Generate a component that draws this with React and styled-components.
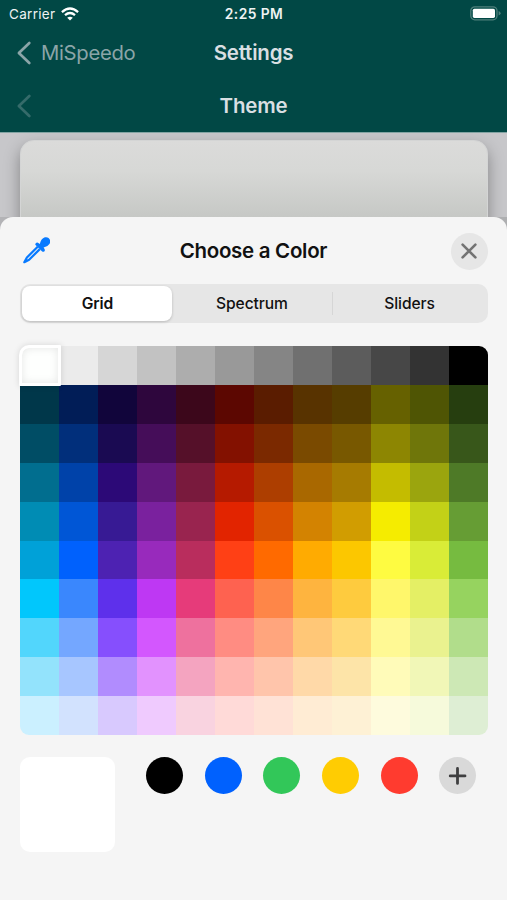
import React from "react";
import styled, { createGlobalStyle } from "styled-components";

const GlobalStyle = createGlobalStyle`
  *, *::before, *::after { box-sizing: border-box; }
  body {
    margin: 0;
    background: #014845;
    font-family: Inter, "Liberation Sans", sans-serif;
  }
  button { font: inherit; color: inherit; border: 0; padding: 0; margin: 0; }
`;

const PALETTE = [
  "FEFFFE EBEBEB D6D6D6 C2C2C2 ADADAD 999999 858585 707070 5C5C5C 474747 333333 000000",
  "00374A 011D57 11053B 2E063D 3C071B 5C0701 5A1C00 583300 563D00 666100 4F5504 263E0F",
  "004D65 012F7B 1A0A52 450D59 551029 831100 7B2900 7A4A00 785800 8D8602 6F760A 38571A",
  "016E8F 0042A9 2C0977 61187C 791A3D B51A00 AD3E00 A96800 A67B01 C4BC00 9BA50E 4E7A27",
  "008CB4 0056D6 371A94 7A219E 99244F E22400 DA5100 D38301 D19D01 F5EC00 C3D117 669D34",
  "00A1D8 0061FD 4D22B2 982ABC B92D5D FF4015 FF6A00 FFAB01 FCC700 FEFB41 D9EC37 76BB40",
  "01C7FC 3A87FD 5E30EB BE38F3 E63B7A FE6250 FE8648 FEB43F FECB3E FFF76B E4EF65 96D35F",
  "52D6FC 74A7FF 864FFD D357FE EE719E FF8C82 FFA57D FFC777 FFD977 FFF994 EAF28F B1DD8B",
  "93E3FC A7C6FF B18CFE E292FE F4A4C0 FFB5AF FFC5AB FFD9A8 FDE4A8 FFFBB9 F1F7B7 CDE8B5",
  "CBF0FF D2E2FE D8C9FE EFCAFE F9D3E0 FFDAD8 FFE2D6 FFECD4 FEF1D5 FEFBDD F6FADB DEEED4",
].flatMap((row) => row.split(" ").map((hex) => `#${hex}`));

const SAVED = ["#000000", "#0061fe", "#32c759", "#ffcc02", "#ff3b2f"];

const Screen = styled.div`
  width: 507px;
  height: 900px;
  display: flex;
  flex-direction: column;
  overflow: hidden;
  background: #014845;
`;

const StatusBar = styled.div`
  display: grid;
  grid-template-columns: 1fr auto 1fr;
  align-items: center;
  height: 26px;
  padding: 1px 6px 0 9px;
  color: #eef3f3;
  font-size: 13.5px;
`;

const Carrier = styled.div`
  display: flex;
  align-items: center;
  gap: 6px;
  letter-spacing: 0.3px;
`;

const Clock = styled.div`
  font-weight: 600;
  font-size: 13.8px;
  letter-spacing: 0.45px;
  margin-right: 2px;
`;

const BatterySlot = styled.div`
  display: flex;
  justify-content: flex-end;
`;

const NavBar = styled.div`
  display: grid;
  grid-template-columns: 1fr auto 1fr;
  align-items: center;
  height: 53px;
  padding: 0 16px;
`;

const BackLink = styled.div`
  display: flex;
  align-items: center;
  gap: 9px;
  color: #8ba5a8;
  opacity: ${(p) => (p.$faded ? 0.38 : 1)};
  font-size: 20.3px;
  letter-spacing: -0.32px;
`;

const NavTitle = styled.div`
  color: #d9dfe2;
  font-size: 20.5px;
  font-weight: 600;
  letter-spacing: -0.2px;
`;

const Backdrop = styled.div`
  flex: none;
  height: 85px;
  padding: 7px 19.5px 0 20.4px;
  background: #c7c7ca;
  border-top: 1px solid #83a4a3;
  overflow: hidden;
`;

const PreviewCard = styled.div`
  height: 110px;
  border-radius: 14px;
  border: 1px solid #d4d5d5;
  background: linear-gradient(#dbdbda 0, #d7d8d6 30px, #c6c8c5 76px);
  box-shadow: 0 7px 16px rgba(0, 0, 0, 0.34);
`;

const SheetArea = styled.div`
  flex: 1;
  background: linear-gradient(90deg, #b3b3b6, #aeafb1);
`;

const Sheet = styled.div`
  height: 100%;
  padding: 14px 19.5px 0 20.4px;
  border-radius: 13px 13px 0 0;
  background: #f5f5f5;
`;

const SheetHeader = styled.div`
  display: grid;
  grid-template-columns: 1fr auto 1fr;
  align-items: center;
  height: 40px;
`;

const SheetTitle = styled.div`
  margin-right: 1px;
  padding-bottom: 2px;
  color: #111;
  font-size: 20.5px;
  font-weight: 600;
  letter-spacing: -0.3px;
`;

const IconButton = styled.button`
  display: flex;
  align-items: center;
  justify-content: center;
  width: 37px;
  height: 37px;
  border-radius: 50%;
  background: ${(p) => p.$fill || "transparent"};
`;

const EyedropperButton = styled(IconButton)`
  justify-content: flex-start;
`;

const CloseButton = styled(IconButton)`
  justify-self: end;
`;

const Segments = styled.div`
  display: grid;
  grid-template-columns: 150px 1fr 156px;
  height: 39px;
  margin-top: 13px;
  padding: 2px 0 2px 2px;
  border-radius: 10px;
  background: #e6e6e6;
`;

const Segment = styled.button`
  display: flex;
  align-items: center;
  justify-content: center;
  border-radius: 8px;
  color: #111;
  font-size: 15.6px;
  font-weight: ${(p) => (p.$active ? 600 : 500)};
  letter-spacing: -0.1px;
  background: ${(p) => (p.$active ? "#fff" : "transparent")};
  box-shadow: ${(p) => (p.$active ? "0 1px 3px rgba(0,0,0,.2)" : "none")};
`;

const DividedSegment = styled(Segment)`
  border-radius: 0;
  background: linear-gradient(#d6d6d6, #d6d6d6) left center / 1px 23px no-repeat;
`;

const ColorGrid = styled.div`
  display: grid;
  grid-template-columns: repeat(12, 1fr);
  grid-template-rows: repeat(10, 1fr);
  height: 389px;
  margin-top: 23px;
  border-radius: 9px;
`;

const corner = { 0: "9px 0 0 0", 11: "0 9px 0 0", 108: "0 0 0 9px", 119: "0 0 9px 0" };

const Swatch = styled.div`
  background: ${(p) => p.$color};
  border-radius: ${(p) => corner[p.$index] || "0"};
`;

const SelectedSwatch = styled(Swatch)`
  position: relative;
  z-index: 1;
  margin: -1px -1.5px -1px -1px;
  border: 3px solid #fff;
  border-radius: 10px 1px 1px 1px;
  box-shadow: 0 0 6px rgba(0, 0, 0, 0.13), inset 0 0 8px rgba(0, 0, 0, 0.1);
`;

const Footer = styled.div`
  display: flex;
  align-items: flex-start;
  margin-top: 22px;
`;

const CurrentColor = styled.div`
  width: 95px;
  height: 95px;
  border-radius: 10px;
  background: #fff;
`;

const SavedColors = styled.div`
  display: flex;
  gap: 21.7px;
  margin-left: 30.6px;
`;

const ColorDot = styled(IconButton)`
  flex: none;
`;

const WifiIcon = () => (
  <svg width="18" height="14" viewBox="0 0 18 14" fill="none" stroke="#fff" strokeWidth="2.3">
    <path d="M.9 5.1Q9-2 17.1 5.1" />
    <path d="M4 8.2Q9 3.9 14 8.2" />
    <path d="M6.2 10.8Q9 8.5 11.8 10.8L9 13.6Z" fill="#fff" stroke="none" />
  </svg>
);

const BatteryIcon = () => (
  <svg width="31" height="15" viewBox="0 0 31 15">
    <rect x="0.8" y="0.8" width="26.2" height="13" rx="4" fill="none" stroke="#4f7f7b" strokeWidth="1.3" />
    <rect x="2.8" y="2.7" width="22.2" height="9.2" rx="1.6" fill="#fff" />
    <path d="M28.6 5v4.6q2-.8 2-2.3t-2-2.3" fill="#4f7f7b" />
  </svg>
);

const BackIcon = () => (
  <svg width="16" height="24" viewBox="0 0 16 24" fill="none" stroke="currentColor" strokeWidth="2.7" strokeLinecap="round" strokeLinejoin="round">
    <path d="M13.3 2 2.9 12l10.4 10" />
  </svg>
);

const EyedropperIcon = () => (
  <svg width="30" height="30" viewBox="0 0 30 30">
    <path
      d="M17.7 10.8 6.9 21.5 4.3 26.2l4.8-2.4L19.8 13.1"
      fill="#f5f5f5"
      stroke="#087aff"
      strokeWidth="2.2"
      strokeLinejoin="round"
    />
    <path
      d="M15.6 7.4q1.4-1.6 3.1-.2l1.1.7q1.1-4.9 4.5-6.4c4.3-1.6 7.5 2.8 5.1 6.5q-1.6 2.7-5.8 3.6l.8 1.2q1 1.6-.2 2.6-1.1 1-2.3-.2l-6.1-5.9q-1-1-.2-1.9Z"
      fill="#087aff"
    />
  </svg>
);

const CloseIcon = () => (
  <svg width="18" height="18" viewBox="0 0 18 18" fill="none" stroke="#737373" strokeWidth="2.6" strokeLinecap="round">
    <path d="m2.6 2.6 12.8 12.8M15.4 2.6 2.6 15.4" />
  </svg>
);

const PlusIcon = () => (
  <svg width="19" height="19" viewBox="0 0 19 19" fill="none" stroke="#3f3f40" strokeWidth="2.8" strokeLinecap="round">
    <path d="M9.5 2.4v15M2.2 9.9h14.8" />
  </svg>
);

export default function App() {
  return (
    <>
      <GlobalStyle />
      <Screen>
        <StatusBar>
          <Carrier>
            Carrier
            <WifiIcon />
          </Carrier>
          <Clock>2:25 PM</Clock>
          <BatterySlot>
            <BatteryIcon />
          </BatterySlot>
        </StatusBar>
        <NavBar>
          <BackLink>
            <BackIcon />
            MiSpeedo
          </BackLink>
          <NavTitle>Settings</NavTitle>
        </NavBar>
        <NavBar>
          <BackLink $faded>
            <BackIcon />
          </BackLink>
          <NavTitle>Theme</NavTitle>
        </NavBar>
        <Backdrop>
          <PreviewCard />
        </Backdrop>
        <SheetArea>
          <Sheet>
            <SheetHeader>
              <EyedropperButton aria-label="Pick a color from the screen">
                <EyedropperIcon />
              </EyedropperButton>
              <SheetTitle>Choose a Color</SheetTitle>
              <CloseButton $fill="#e6e6e6" aria-label="Close">
                <CloseIcon />
              </CloseButton>
            </SheetHeader>
            <Segments>
              <Segment $active>Grid</Segment>
              <Segment>Spectrum</Segment>
              <DividedSegment>Sliders</DividedSegment>
            </Segments>
            <ColorGrid>
              {PALETTE.map((color, i) => {
                const Cell = i === 0 ? SelectedSwatch : Swatch;
                return <Cell key={i} $index={i} $color={color} />;
              })}
            </ColorGrid>
            <Footer>
              <CurrentColor />
              <SavedColors>
                {SAVED.map((color) => (
                  <ColorDot key={color} $fill={color} aria-label={`Saved color ${color}`} />
                ))}
                <ColorDot $fill="#d9d9d9" aria-label="Add color">
                  <PlusIcon />
                </ColorDot>
              </SavedColors>
            </Footer>
          </Sheet>
        </SheetArea>
      </Screen>
    </>
  );
}
